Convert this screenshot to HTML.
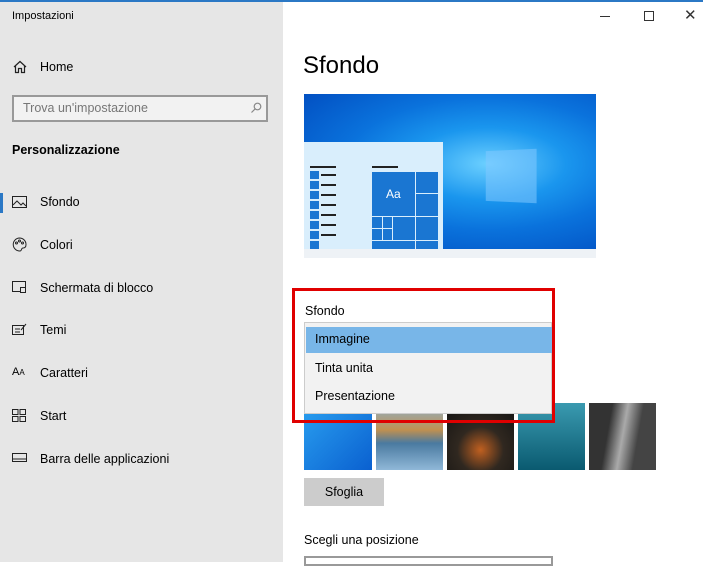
<!DOCTYPE html><html><head><style>
*{margin:0;padding:0;box-sizing:border-box}
body{width:703px;height:562px;overflow:hidden;font-family:"Liberation Sans",sans-serif;background:#fff;position:relative;color:#000}
.a{position:absolute;white-space:nowrap}
#side{position:absolute;left:0;top:0;width:283px;height:562px;background:#e6e6e6}
.it{position:absolute;left:40px;font-size:12.5px}
</style></head><body>
<div id="side">
<div class="a" style="left:12px;top:10px;font-size:11px">Impostazioni</div>
<svg class="a" style="left:13px;top:60px" width="14" height="14" viewBox="0 0 14 14" fill="none" stroke="#222" stroke-width="1.2"><path d="M1 7L7 1.5 13 7M2.5 5.5V12.5H5.5V8.5H8.5V12.5H11.5V5.5"/></svg>
<div class="it" style="top:60px">Home</div>
<div class="a" style="left:12px;top:95px;width:256px;height:27px;border:2px solid #999;background:#f2f2f2"></div>
<div class="a" style="left:23px;top:101px;font-size:12.5px;color:#777">Trova un'impostazione</div>
<svg class="a" style="left:250px;top:102px" width="12" height="12" fill="none" stroke="#888" stroke-width="1.2"><circle cx="7.5" cy="4.5" r="3.3"/><path d="M5 7L1.5 10.5"/></svg>
<div class="a" style="left:12px;top:143px;font-size:12.5px;font-weight:bold">Personalizzazione</div>
<div class="a" style="left:0;top:193px;width:3px;height:20px;background:#2b78c5"></div>
<svg class="a" style="left:12px;top:196px" width="15" height="12" fill="none" stroke="#222"><rect x="0.5" y="0.5" width="14" height="11"/><path d="M1 9L5 5 9 9 11 7 14 10"/></svg>
<div class="it" style="top:195px">Sfondo</div>
<svg class="a" style="left:12px;top:237px" width="15" height="15" fill="none" stroke="#222"><path d="M7.5 1A6.5 6.5 0 1 0 8 14C10 14 9 11 11 11 13 11 14 10 14 7.5A6.5 6.5 0 0 0 7.5 1Z"/><circle cx="4.5" cy="6" r="1"/><circle cx="7.5" cy="4" r="1"/><circle cx="10.5" cy="6" r="1"/></svg>
<div class="it" style="top:238px">Colori</div>
<svg class="a" style="left:12px;top:281px" width="15" height="13" fill="none" stroke="#222"><rect x="0.5" y="0.5" width="13" height="10"/><rect x="8.5" y="6.5" width="5" height="5" fill="#e6e6e6"/></svg>
<div class="it" style="top:281px">Schermata di blocco</div>
<svg class="a" style="left:12px;top:323px" width="15" height="13" fill="none" stroke="#222"><rect x="0.5" y="2.5" width="11" height="9"/><path d="M3 6H8M3 9H8M9 7L14 1"/></svg>
<div class="it" style="top:323px">Temi</div>
<div class="a" style="left:12px;top:366px;font-size:11px">A<span style="font-size:8px">A</span></div>
<div class="it" style="top:366px">Caratteri</div>
<svg class="a" style="left:12px;top:409px" width="14" height="13" fill="none" stroke="#222"><rect x="0.5" y="0.5" width="5.5" height="5"/><rect x="8" y="0.5" width="5.5" height="5"/><rect x="0.5" y="7.5" width="5.5" height="5"/><rect x="8" y="7.5" width="5.5" height="5"/></svg>
<div class="it" style="top:409px">Start</div>
<svg class="a" style="left:12px;top:453px" width="15" height="10" fill="none" stroke="#222"><rect x="0.5" y="0.5" width="14" height="8"/><path d="M1 6H14"/></svg>
<div class="it" style="top:452px">Barra delle applicazioni</div>
</div>
<div class="a" style="left:0;top:0;width:703px;height:2px;background:#2b78c5"></div>
<div class="a" style="left:600px;top:16px;width:10px;height:1px;background:#333"></div>
<div class="a" style="left:644px;top:11px;width:10px;height:10px;border:1px solid #333"></div>
<div class="a" style="left:684px;top:6px;font-size:15px;color:#333">✕</div>
<div class="a" style="left:303px;top:52px;font-size:24px">Sfondo</div>
<div class="a" style="left:304px;top:94px;width:292px;height:155px;background:radial-gradient(ellipse at 63% 45%,#6cd0ff 0%,#1a96ee 30%,#0a72dc 55%,#0048bc 100%)"></div>
<div class="a" style="left:304px;top:249px;width:292px;height:9px;background:#eef2f6"></div>
<div class="a" style="left:483px;top:150px;width:54px;height:52px;background:rgba(130,200,255,.55);transform:perspective(200px) rotateY(-20deg)"></div>
<div class="a" style="left:304px;top:142px;width:139px;height:107px;background:#d9eefc"></div>
<div class="a" style="left:310px;top:166px;width:26px;height:2px;background:#222"></div>
<div class="a" style="left:310px;top:171px;width:9px;height:78px;background:repeating-linear-gradient(#1a76d2 0 8px,#d9eefc 8px 10px)"></div>
<div class="a" style="left:321px;top:174px;width:15px;height:70px;background:repeating-linear-gradient(#222 0 2px,transparent 2px 10px)"></div>
<div class="a" style="left:372px;top:166px;width:26px;height:2px;background:#222"></div>
<div class="a" style="left:372px;top:172px;width:66px;height:77px;background:#1a76d2"></div>
<div class="a" style="left:415px;top:172px;width:1px;height:77px;background:#d9eefc"></div>
<div class="a" style="left:372px;top:216px;width:66px;height:1px;background:#d9eefc"></div>
<div class="a" style="left:372px;top:240px;width:66px;height:1px;background:#d9eefc"></div>
<div class="a" style="left:416px;top:193px;width:22px;height:1px;background:#d9eefc"></div>
<div class="a" style="left:382px;top:217px;width:1px;height:23px;background:#d9eefc"></div>
<div class="a" style="left:392px;top:217px;width:1px;height:23px;background:#d9eefc"></div>
<div class="a" style="left:372px;top:228px;width:21px;height:1px;background:#d9eefc"></div>
<div class="a" style="left:386px;top:187px;font-size:12px;color:#fff">Aa</div>
<div class="a" style="left:304px;top:403px;width:68px;height:67px;background:linear-gradient(135deg,#2aa0f0,#0a60d0)"></div>
<div class="a" style="left:376px;top:403px;width:67px;height:67px;background:linear-gradient(#8ab4d0,#c09050 40%,#4a7aa0 60%,#90b8d8)"></div>
<div class="a" style="left:447px;top:403px;width:67px;height:67px;background:radial-gradient(circle at 50% 70%,#c06020,#302820 40%,#101010)"></div>
<div class="a" style="left:518px;top:403px;width:67px;height:67px;background:linear-gradient(#3a9ab0,#0a5a70)"></div>
<div class="a" style="left:589px;top:403px;width:67px;height:67px;background:linear-gradient(100deg,#333 30%,#aaa 50%,#444 70%)"></div>
<div class="a" style="left:304px;top:478px;width:80px;height:28px;background:#ccc;font-size:12.5px;text-align:center;line-height:28px">Sfoglia</div>
<div class="a" style="left:304px;top:533px;font-size:12.5px">Scegli una posizione</div>
<div class="a" style="left:304px;top:556px;width:249px;height:10px;border:2px solid #999"></div>
<div class="a" style="left:292px;top:288px;width:263px;height:135px;border:3px solid #e00000"></div>
<div class="a" style="left:305px;top:304px;font-size:12.5px">Sfondo</div>
<div class="a" style="left:304px;top:322px;width:248px;height:92px;background:#f2f2f2;border:1px solid #ccc"></div>
<div class="a" style="left:306px;top:327px;width:246px;height:26px;background:#78b6e8"></div>
<div class="a" style="left:315px;top:332px;font-size:12.5px">Immagine</div>
<div class="a" style="left:315px;top:361px;font-size:12.5px">Tinta unita</div>
<div class="a" style="left:315px;top:389px;font-size:12.5px">Presentazione</div>
</body></html>
